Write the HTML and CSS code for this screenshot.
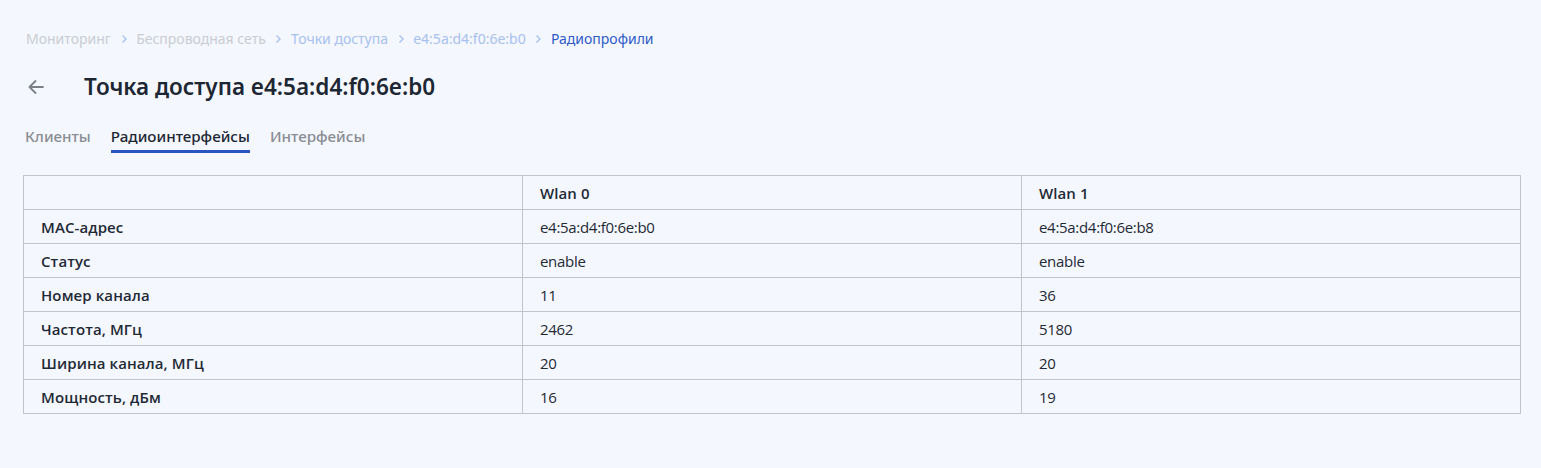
FILE: index.html
```html
<!DOCTYPE html>
<html lang="ru">
<head>
<meta charset="utf-8">
<link rel="stylesheet" href="styles.css">
</head>
<body>
<div class="page">
  <nav class="crumbs">
    <span class="crumb muted">Мониторинг</span>
    <span class="sep"><svg width="8" height="10" viewBox="0 0 8 10"><path d="M2.5 1.5 L6 5 L2.5 8.5" fill="none" stroke="currentColor" stroke-width="1.4"/></svg></span>
    <span class="crumb muted">Беспроводная сеть</span>
    <span class="sep"><svg width="8" height="10" viewBox="0 0 8 10"><path d="M2.5 1.5 L6 5 L2.5 8.5" fill="none" stroke="currentColor" stroke-width="1.4"/></svg></span>
    <span class="crumb link">Точки доступа</span>
    <span class="sep"><svg width="8" height="10" viewBox="0 0 8 10"><path d="M2.5 1.5 L6 5 L2.5 8.5" fill="none" stroke="currentColor" stroke-width="1.4"/></svg></span>
    <span class="crumb link">e4:5a:d4:f0:6e:b0</span>
    <span class="sep"><svg width="8" height="10" viewBox="0 0 8 10"><path d="M2.5 1.5 L6 5 L2.5 8.5" fill="none" stroke="currentColor" stroke-width="1.4"/></svg></span>
    <span class="crumb current">Радиопрофили</span>
  </nav>
  <header class="title-row">
    <span class="back"><svg width="20" height="20" viewBox="0 0 20 20"><path d="M17 10 H3.5 M9.5 4 L3.5 10 L9.5 16" fill="none" stroke="currentColor" stroke-width="1.8" stroke-linecap="round" stroke-linejoin="round"/></svg></span>
    <h1 class="title">Точка доступа e4:5a:d4:f0:6e:b0</h1>
  </header>
  <div class="tabs">
    <span class="tab">Клиенты</span>
    <span class="tab active">Радиоинтерфейсы</span>
    <span class="tab">Интерфейсы</span>
  </div>
  <table class="grid">
    <thead>
      <tr><th></th><th>Wlan 0</th><th>Wlan 1</th></tr>
    </thead>
    <tbody>
      <tr><th>MAC-адрес</th><td>e4:5a:d4:f0:6e:b0</td><td>e4:5a:d4:f0:6e:b8</td></tr>
      <tr><th>Статус</th><td>enable</td><td>enable</td></tr>
      <tr><th>Номер канала</th><td>11</td><td>36</td></tr>
      <tr><th>Частота, МГц</th><td>2462</td><td>5180</td></tr>
      <tr><th>Ширина канала, МГц</th><td>20</td><td>20</td></tr>
      <tr><th>Мощность, дБм</th><td>16</td><td>19</td></tr>
    </tbody>
  </table>
</div>
</body>
</html>
```
FILE: styles.css
```css
html, body {
  margin: 0;
  padding: 0;
  background: #f4f7fd;
}
body {
  font-family: "Noto Sans", "Open Sans", sans-serif;
  color: #1f2a36;
}
.page {
  padding: 29px 21px 0 23px;
}
.crumbs {
  display: flex;
  align-items: center;
  gap: 8.6px;
  font-size: 14px;
  line-height: 20px;
  padding-left: 3px;
}
.crumb.muted { color: #c9cdd3; }
.crumb.link { color: #a8c1f0; }
.crumb.current { color: #2f5bc9; }
.sep {
  display: flex;
  color: #a8c1f0;
}
.title-row {
  display: flex;
  align-items: center;
  margin-top: 21px;
  height: 34px;
}
.back {
  display: flex;
  color: #7b8088;
  width: 58px;
  padding-left: 3px;
}
.title {
  margin: 0;
  font-size: 22.5px;
  font-weight: 600;
  line-height: 34px;
  color: #1d2733;
}
.tabs {
  display: flex;
  gap: 20px;
  margin-top: 22px;
  padding-left: 2px;
  font-size: 15.2px;
  font-weight: 500;
}
.tab {
  color: #8a8d92;
  line-height: 21px;
  padding-bottom: 3px;
  border-bottom: 3px solid transparent;
}
.tab.active {
  color: #1d2733;
  border-bottom-color: #2a55c1;
}
.grid {
  margin-top: 22px;
  width: 1498px;
  border-collapse: collapse;
  font-family: "Open Sans", sans-serif;
  font-size: 15px;
  table-layout: fixed;
}
.grid th, .grid td {
  border: 1px solid #c3c4c9;
  height: 33px;
  padding: 0 17px;
  text-align: left;
  color: #1f2a36;
}
.grid th {
  font-weight: 600;
  letter-spacing: 0.1px;
}
.grid td {
  font-weight: 400;
  letter-spacing: -0.3px;
}
```
